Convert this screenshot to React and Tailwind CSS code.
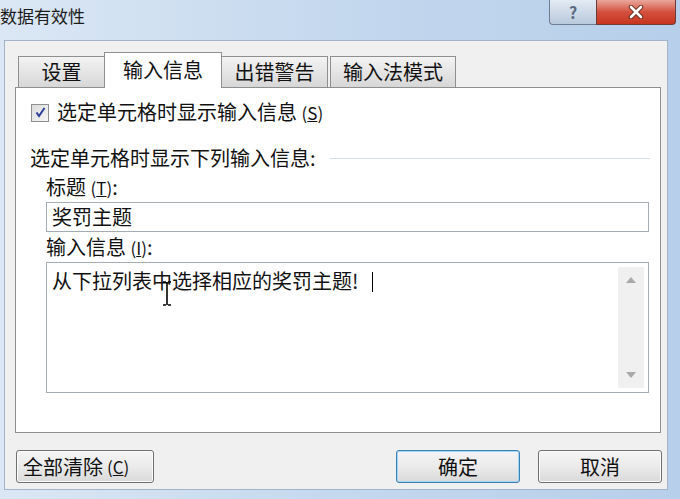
import React from "react";

const font = { fontFamily: '"Noto Sans CJK SC", "Liberation Sans", sans-serif' };

const Tab = ({ label, active, className = "" }) =>
  active ? (
    <div
      className={`relative z-10 -mb-px flex h-[36px] items-center justify-center border border-b-0 border-[#8e8f8f] bg-white pb-[2px] text-[20px] text-[#111] ${className}`}
    >
      {label}
    </div>
  ) : (
    <div
      className={`flex h-[31px] items-center justify-center border border-b-0 border-[#8e8f8f] bg-gradient-to-b from-[#f3f3f3] to-[#d7d7d7] text-[20px] text-[#111] ${className}`}
    >
      {label}
    </div>
  );

const Button = ({ children, primary, className = "" }) => (
  <button
    className={`flex h-[33px] items-center justify-center rounded-[3px] border bg-gradient-to-b from-[#f4f4f4] via-[#ebebeb] to-[#d9d9d9] text-[20px] text-[#111] ${
      primary
        ? "border-[#3c7fb1] shadow-[inset_0_0_0_1px_#9fd6f5]"
        : "border-[#707070] shadow-[inset_0_0_0_1px_#fbfbfb]"
    } ${className}`}
  >
    {children}
  </button>
);

export default function App() {
  return (
    <div
      className="flex h-[499px] w-[680px] flex-col overflow-hidden bg-gradient-to-r from-[#dbe7f4] via-[#c4d8ee] to-[#b7cfea]"
      style={font}
    >
      {/* Title bar */}
      <div className="flex h-[40px] shrink-0 items-start justify-between">
        <div className="pt-[3px] text-[17px] text-[#1b1b1b]">数据有效性</div>
        <div className="mr-[4px] flex">
          <div className="flex h-[25px] w-[47px] items-center justify-center rounded-bl-[4px] border border-r-0 border-t-0 border-[#6d7d92] bg-gradient-to-b from-[#e3ebf4] to-[#b9c9dc]">
            <span className="text-[16px] font-bold text-[#5a6a80]">?</span>
          </div>
          <div className="flex h-[25px] w-[80px] items-center justify-center rounded-br-[4px] border border-t-0 border-[#6d3c38] bg-gradient-to-b from-[#e8a79b] via-[#d24f3c] to-[#c8351f]">
            <svg width="16" height="14" viewBox="0 0 16 14">
              <path d="M3 2 L13 12 M13 2 L3 12" stroke="#5b2a22" strokeWidth="4.5" strokeLinecap="round" />
              <path d="M3 2 L13 12 M13 2 L3 12" stroke="#fff" strokeWidth="2.6" strokeLinecap="round" />
            </svg>
          </div>
        </div>
      </div>

      {/* Body */}
      <div className="ml-[4px] mr-[12px] flex h-[450px] flex-col border border-[#a3b4c8] bg-[#f0f0f0] pl-[10px] pr-[6px] pt-[11px]">
        {/* Tabs */}
        <div className="flex items-end pl-[3px]">
          <Tab label="设置" className="w-[86px] border-r-0" />
          <Tab label="输入信息" active className="w-[118px]" />
          <Tab label="出错警告" className="w-[106px] border-l-0" />
          <Tab label="输入法模式" className="ml-[2px] w-[126px]" />
        </div>

        {/* Panel */}
        <div className="flex h-[346px] flex-col border border-[#8e8f8f] bg-white pl-[15px] pr-[11px] pt-[13px] text-[20px] text-[#111]">
          <div className="flex items-center gap-[8px] leading-[22px]">
            <div className="flex h-[18px] w-[18px] items-center justify-center border border-[#8f8f8f] bg-gradient-to-br from-[#dcdcdc] to-[#f6f6f6]">
              <svg width="13" height="13" viewBox="0 0 13 13">
                <path d="M2.5 6.5 L5 10 L10.5 2" fill="none" stroke="#2b3f9a" strokeWidth="2" />
              </svg>
            </div>
            <span>
              选定单元格时显示输入信息 <span className="text-[17px]">(<u>S</u>)</span>
            </span>
          </div>

          <div className="mt-[23px] flex items-center leading-[22px]">
            <span className="-ml-px">选定单元格时显示下列输入信息:</span>
            <div className="ml-[14px] mr-[-1px] h-px flex-1 bg-[#d5dfe5]" />
          </div>

          <div className="ml-[15px] mt-[7px] leading-[22px]">
            标题 <span className="text-[17px]">(<u>T</u>)</span>:
          </div>
          <div className="ml-[15px] mt-[3px] flex h-[30px] items-center border border-[#a5acb5] px-[5px] leading-none">
            奖罚主题
          </div>

          <div className="ml-[15px] mt-[4px] leading-[22px]">
            输入信息 <span className="text-[17px]">(<u>I</u>)</span>:
          </div>
          <div className="relative ml-[15px] mt-[3px] flex h-[131px] border border-[#a5acb5]">
            <div className="flex-1 px-[5px] pt-[6px] leading-[24px]">
              从下拉列表中选择相应的奖罚主题!
              <span className="ml-[14px] inline-block h-[20px] w-px translate-y-[3px] bg-black" />
            </div>
            <div className="my-[4px] mr-[4px] flex w-[26px] flex-col items-center justify-between bg-[#f0f0f0] py-[10px]">
              <svg width="10" height="6" viewBox="0 0 10 6">
                <path d="M0 6 L5 0 L10 6 Z" fill="#a9a9a9" />
              </svg>
              <svg width="10" height="6" viewBox="0 0 10 6">
                <path d="M0 0 L10 0 L5 6 Z" fill="#a9a9a9" />
              </svg>
            </div>
            {/* mouse I-beam cursor */}
            <svg className="absolute left-[114px] top-[18px]" width="12" height="26" viewBox="0 0 12 26">
              <path d="M2 1 H5 M7 1 H10 M6 1 V24 M2 24 H5 M7 24 H10" stroke="#000" strokeWidth="1.6" fill="none" />
            </svg>
          </div>
        </div>

        {/* Buttons */}
        <div className="mt-[17px] flex items-center">
          <Button className="ml-px w-[138px] justify-start pl-[6px]">
            全部清除 <span className="ml-[4px] text-[17px]">(<u>C</u>)</span>
          </Button>
          <div className="flex-1" />
          <Button primary className="w-[124px]">确定</Button>
          <Button className="ml-[18px] mr-[-1px] w-[124px]">取消</Button>
        </div>
      </div>
    </div>
  );
}
